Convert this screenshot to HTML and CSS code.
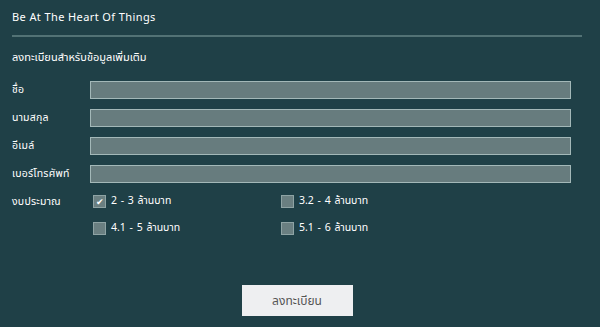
FILE: index.html
```html
<html>

<head>
    <meta charset="UTF-8">
    <meta name="viewport" content="width=device-width, initial-scale=1.0">
    <title>Be At The Heart Of Things</title>
    <link rel="stylesheet" href="styles.css">
</head>

<body>
    <div class="container">
        <h2>Be At The Heart Of Things</h2>
        <hr class="divider">
        <h3>ลงทะเบียนสำหรับข้อมูลเพิ่มเติม</h3>

        <div class="form-row">
            <label>ชื่อ</label>
            <input type="text">
        </div>
        <div class="form-row">
            <label>นามสกุล</label>
            <input type="text">
        </div>
        <div class="form-row">
            <label>อีเมล์</label>
            <input type="text">
        </div>
        <div class="form-row">
            <label>เบอร์โทรศัพท์</label>
            <input type="text">
        </div>

        <div class="budget-row">
            <label>งบประมาณ</label>
            <div class="budget-grid">
                <div class="option"><span class="box checked">&#10004;</span>2 - 3 ล้านบาท</div>
                <div class="option"><span class="box"></span>3.2 - 4 ล้านบาท</div>
                <div class="option"><span class="box"></span>4.1 - 5 ล้านบาท</div>
                <div class="option"><span class="box"></span>5.1 - 6 ล้านบาท</div>
            </div>
        </div>

        <div class="button-group">
            <button type="button">ลงทะเบียน</button>
        </div>
    </div>
</body>

</html>
```

FILE: styles.css
```css
body {
    font-family: "Noto Sans", "Noto Sans Thai", sans-serif;
    margin: 0;
    background-color: #1f4047;
    color: #ffffff;
}

.container {
    padding: 8px 18px 0 12px;
}

h2 {
    font-size: 11px;
    letter-spacing: 0.4px;
    font-weight: normal;
    margin: 0;
    height: 18px;
    line-height: 18px;
}

.divider {
    border: none;
    height: 2px;
    background-color: #527275;
    margin: 9px 0 0 0;
}

h3 {
    font-size: 11px;
    font-weight: normal;
    margin: 11px 0 15px 0;
    height: 18px;
    line-height: 18px;
}

.form-row {
    display: flex;
    align-items: center;
    margin-bottom: 10px;
    padding-right: 11px;
}

.form-row label,
.budget-row label {
    width: 78px;
    font-size: 10.5px;
    letter-spacing: 0.2px;
}

.form-row input {
    flex: 1;
    height: 18px;
    background-color: #677c7e;
    border: 1px solid #a3b8b8;
    border-radius: 0;
}

.budget-row {
    display: flex;
    margin-top: -2px;
}

.budget-row label {
    line-height: 20px;
}

.budget-grid {
    display: grid;
    grid-template-columns: 188px 150px;
    row-gap: 7px;
}

.option {
    display: flex;
    align-items: center;
    font-size: 10.5px;
    word-spacing: 1px;
    height: 20px;
    padding-left: 3px;
}

.box {
    width: 11px;
    height: 11px;
    background-color: #6a7f81;
    border: 1px solid #8ea3a4;
    margin-right: 5px;
    font-size: 9px;
    line-height: 11px;
    text-align: center;
    color: #ffffff;
}

.button-group {
    display: flex;
    justify-content: center;
    margin-top: 47px;
}

button {
    width: 111px;
    height: 31px;
    background-color: #eeeff1;
    border: none;
    border-radius: 0;
    color: #555555;
    font-family: inherit;
    font-size: 12px;
}
```
